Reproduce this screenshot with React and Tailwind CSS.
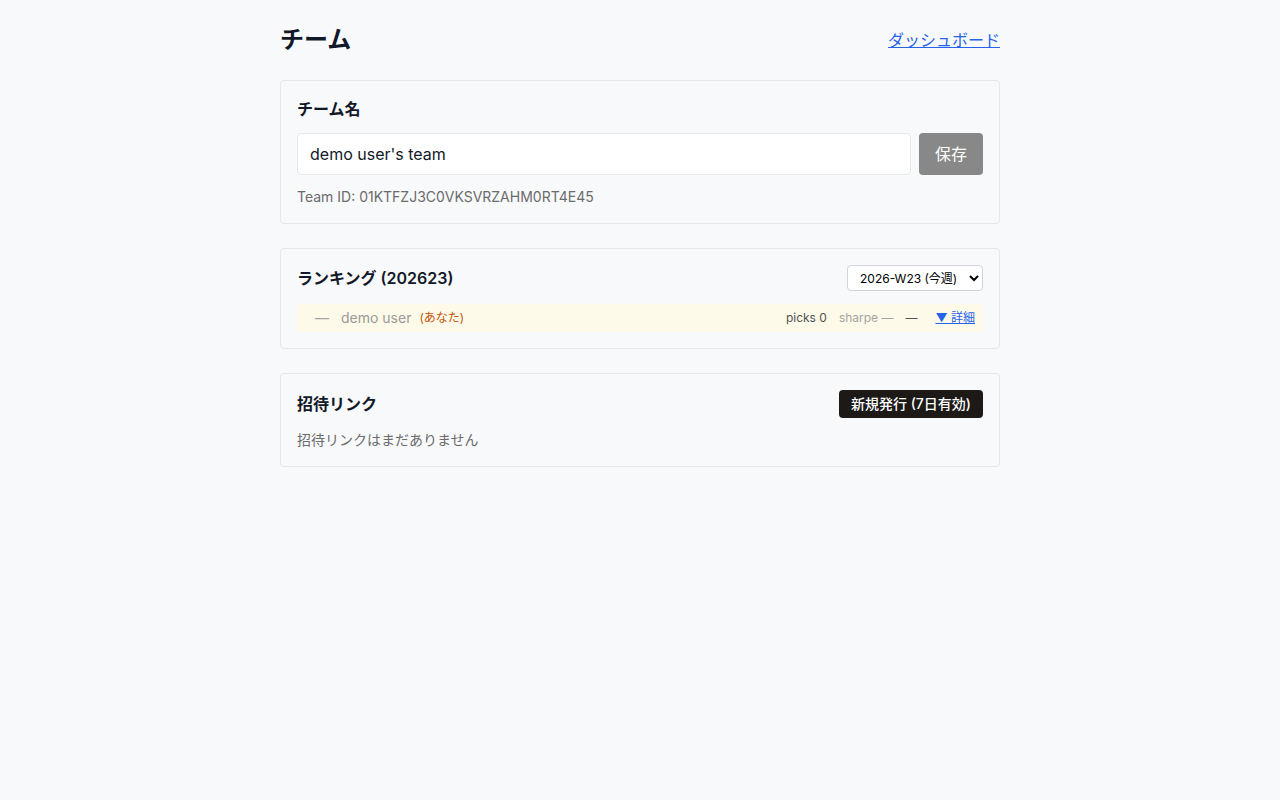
export default function App() {
  const font = { fontFamily: 'Inter, "Noto Sans CJK JP", sans-serif' };
  return (
    <div className="min-h-screen bg-[#f8f9fb] text-[#111827]" style={font}>
      <div className="mx-auto w-[720px] pt-[22px]">
        <div className="flex items-center justify-between">
          <h1 className="text-2xl font-bold leading-9">チーム</h1>
          <a href="#" className="text-base text-[#2563eb] underline">ダッシュボード</a>
        </div>

        <div className="mt-[22px] rounded border border-[#e5e7eb] p-4">
          <h2 className="text-base font-semibold leading-6">チーム名</h2>
          <div className="mt-3 flex gap-2">
            <input
              defaultValue="demo user's team"
              className="h-[42px] flex-1 rounded border border-[#e5e7eb] bg-white px-3 text-base outline-none"
              style={font}
            />
            <button className="h-[42px] w-16 rounded bg-[#888888] text-base text-white">保存</button>
          </div>
          <p className="mt-3 text-sm leading-5 text-[#6b6b6b]">Team ID: 01KTFZJ3C0VKSVRZAHM0RT4E45</p>
        </div>

        <div className="mt-6 rounded border border-[#e5e7eb] p-4">
          <div className="flex items-center justify-between">
            <h2 className="text-base font-semibold leading-6">ランキング (202623)</h2>
            <select className="h-[26px] w-[136px] rounded border border-[#d1d5db] bg-white px-2 text-xs text-black" style={font}>
              <option>2026-W23 (今週)</option>
            </select>
          </div>
          <div className="mt-[13px] flex h-[28px] items-center rounded-sm bg-[#fefae9] px-2 text-sm">
            <span className="ml-[10px] text-[#a3a3a3]">—</span>
            <span className="ml-3 text-[#9a9a9a]">demo user</span>
            <span className="ml-2 text-xs text-[#c2570c]">(あなた)</span>
            <span className="ml-auto text-xs text-[#525252]">picks 0</span>
            <span className="ml-3 text-xs text-[#a3a3a3]">sharpe —</span>
            <span className="ml-3 text-xs text-[#525252]">—</span>
            <a href="#" className="ml-[18px] text-xs text-[#2563eb] underline">▼ 詳細</a>
          </div>
        </div>

        <div className="mt-6 rounded border border-[#e5e7eb] p-4">
          <div className="flex items-center justify-between">
            <h2 className="text-base font-semibold leading-6">招待リンク</h2>
            <button className="h-[28px] rounded bg-[#1c1917] px-3 text-sm font-medium text-white">新規発行 (7日有効)</button>
          </div>
          <p className="mt-3 text-sm leading-5 text-[#6b6b6b]">招待リンクはまだありません</p>
        </div>
      </div>
    </div>
  );
}
